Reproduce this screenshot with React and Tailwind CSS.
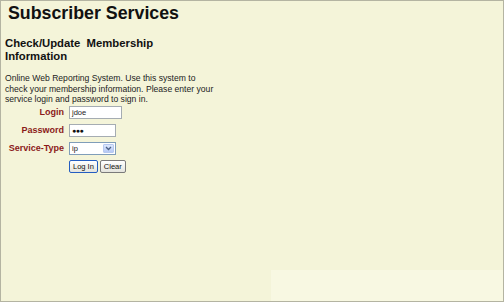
import React from 'react';

const font = { fontFamily: '"Liberation Sans", Arial, sans-serif' };

function Field({ label, children }) {
  return (
    <div className="flex items-center h-[18px]">
      <div className="w-[63px] text-right text-[9px] font-bold text-[#8b1a1a]">{label}</div>
      <div className="ml-[5px] flex items-center">{children}</div>
    </div>
  );
}

export default function App() {
  return (
    <div style={font} className="relative w-[504px] h-[302px] bg-[#f4f4d9] border border-[#b4b4a2] text-black overflow-hidden">
      {/* faint lighter block at bottom right */}
      <div className="absolute right-0 bottom-0 w-[232px] h-[31px] bg-[#f8f8e2]"></div>

      <div className="relative">
        <h1 className="pl-[7px] pt-[1px] text-[17.8px] font-bold leading-[22px] text-[#111]">Subscriber Services</h1>

        <div className="w-[213px] pl-[4px]">
          <h2 className="mt-[13px] text-[11.3px] font-bold leading-[13px] text-[#111]">
            Check/Update&nbsp; Membership Information
          </h2>

          <p className="mt-[10px] text-[8.6px] leading-[10.5px] text-[#222]">
            Online Web Reporting System. Use this system to check your membership information. Please enter your service login and password to sign in.
          </p>
        </div>

        <div className="-mt-[1px] flex flex-col">
          <Field label="Login">
            <div className="w-[53px] h-[13px] bg-white border border-[#a5acb2] text-[7.5px] leading-[11px] pl-[2px] text-[#222]">jdoe</div>
          </Field>
          <Field label="Password">
            <div className="w-[47px] h-[13px] bg-white border border-[#a5acb2] text-[7px] leading-[11px] pl-[2px] text-[#111] tracking-[-0.5px]">●●●</div>
          </Field>
          <Field label="Service-Type">
            <div className="w-[47px] h-[13px] bg-white border border-[#7f9db9] flex items-stretch">
              <div className="flex-1 text-[7.5px] leading-[11px] pl-[2px] text-[#222]">ip</div>
              <div className="w-[11px] m-[1px] rounded-[1px] bg-gradient-to-b from-[#dde8fd] to-[#b6c9f5] border border-[#b7c9f0] flex items-center justify-center">
                <svg width="7" height="5" viewBox="0 0 7 5">
                  <path d="M1 1 L3.5 3.5 L6 1" fill="none" stroke="#4d6185" strokeWidth="1.3" />
                </svg>
              </div>
            </div>
          </Field>
          <div className="flex h-[18px] items-center pl-[68px] gap-[2px]">
            <div className="h-[13px] px-[3px] rounded-[2px] border border-[#245dc1] bg-gradient-to-b from-white to-[#e4e4dd] text-[7.5px] leading-[11px] text-[#111]">Log In</div>
            <div className="h-[13px] px-[3px] rounded-[2px] border border-[#7a7a7a] bg-gradient-to-b from-white to-[#e4e4dd] text-[7.5px] leading-[11px] text-[#111]">Clear</div>
          </div>
        </div>
      </div>
    </div>
  );
}
